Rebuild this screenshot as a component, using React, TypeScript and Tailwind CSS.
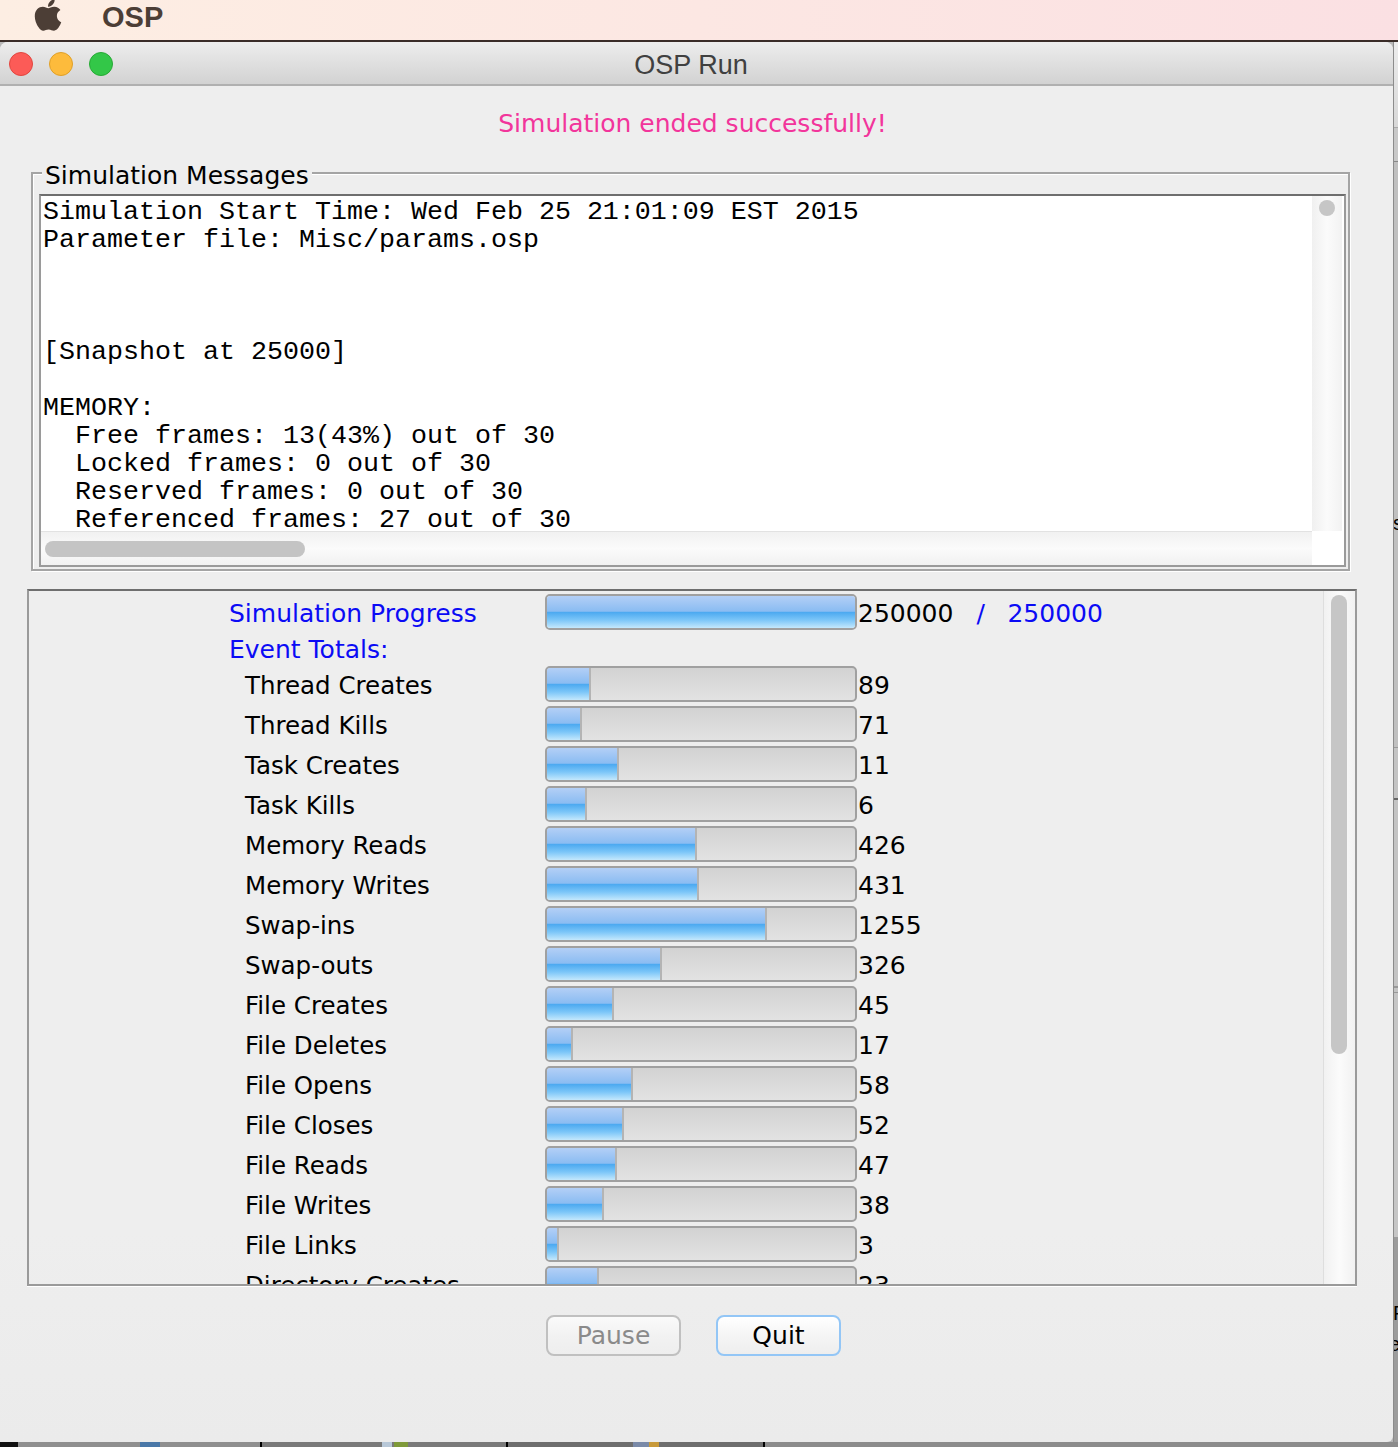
import { FaApple } from 'react-icons/fa';

const fillBg =
  'bg-[linear-gradient(180deg,#b3cff6_0%,#8abcf2_48%,#4aa8f0_50%,#7cc6f8_75%,#c4e8fc_100%)]';

const events: [string, string, number][] = [
  ['Thread Creates', '89', 44],
  ['Thread Kills', '71', 35],
  ['Task Creates', '11', 72],
  ['Task Kills', '6', 40],
  ['Memory Reads', '426', 150],
  ['Memory Writes', '431', 152],
  ['Swap-ins', '1255', 220],
  ['Swap-outs', '326', 115],
  ['File Creates', '45', 67],
  ['File Deletes', '17', 26],
  ['File Opens', '58', 86],
  ['File Closes', '52', 77],
  ['File Reads', '47', 70],
  ['File Writes', '38', 57],
  ['File Links', '3', 12],
  ['Directory Creates', '23', 52],
];

const messages = [
  'Simulation Start Time: Wed Feb 25 21:01:09 EST 2015',
  'Parameter file: Misc/params.osp',
  '',
  '',
  '',
  '[Snapshot at 25000]',
  '',
  'MEMORY:',
  '  Free frames: 13(43%) out of 30',
  '  Locked frames: 0 out of 30',
  '  Reserved frames: 0 out of 30',
  '  Referenced frames: 27 out of 30',
];

function Bar({ fill }: { fill: number }) {
  return (
    <div className="w-[312px] h-[36px] mb-[4px] shrink-0 rounded-[5px] border-2 border-[#a0a0a0] bg-[linear-gradient(180deg,#d2d2d2,#e2e2e2)] overflow-hidden">
      <div
        className={`h-full border-r-2 border-[#b4b4b4] ${fillBg}`}
        style={{ width: fill }}
      />
    </div>
  );
}

// sliver of whatever sits behind the window on the right
function DesktopStrip() {
  return (
    <div className="relative flex-1 flex flex-col overflow-hidden border-l border-[#8c8c8c] font-['Liberation_Sans',sans-serif] text-[20px] leading-none text-black">
      <div className="h-[86px] shrink-0 bg-[linear-gradient(180deg,#ececec,#d8d8d8)] border-b border-[#aaaaaa]" />
      <div className="h-[34px] shrink-0 bg-[#c8c8c8] border-b border-[#888888]" />
      <div className="h-[586px] shrink-0 bg-[#c0c0c0] border-b border-[#9a9a9a]" />
      <div className="h-[52px] shrink-0 bg-[#c4c4c4] border-b-2 border-[#666666]" />
      <div className="h-[188px] shrink-0 bg-[#c4c4c4] border-b-2 border-[#999999]" />
      <div className="h-[5px] shrink-0 bg-[#c4c4c4] border-b border-[#999999]" />
      <div className="h-[244px] shrink-0 bg-[#c6c6c6]" />
      <div className="flex-1 bg-[#9c9c9c]" />
      <span className="absolute left-[-1px] top-[471px]">s</span>
      <span className="absolute left-[-1px] top-[1261px]">P</span>
      <span className="absolute left-[-5px] top-[1292px]">e</span>
    </div>
  );
}

export default function App() {
  return (
    <div className="w-[1398px] h-[1447px] overflow-hidden flex flex-col font-['DejaVu_Sans',sans-serif] text-black">
      {/* menu bar */}
      <div className="h-[42px] shrink-0 flex items-start border-b-2 border-[#3a2c28] bg-[linear-gradient(90deg,#fdeee3,#fbe0e3)] text-[#4c3e36]">
        <FaApple className="w-[32px] h-[36px] ml-[32px] -mt-[3px]" />
        <span className="ml-[38px] mt-[-1px] text-[29px] leading-[36px] font-bold font-['Liberation_Sans',sans-serif]">
          OSP
        </span>
      </div>

      <div className="flex-1 flex min-h-0 bg-[#b8b8b8]">
        {/* window */}
        <div className="w-[1393px] shrink-0 flex flex-col rounded-t-[8px] rounded-br-[6px] overflow-hidden bg-[linear-gradient(180deg,#eeeeee_85%,#ebebeb)]">
          <div className="relative h-[44px] shrink-0 flex items-center justify-center border-b-2 border-[#b0b0b0] bg-[linear-gradient(180deg,#ededed,#d2d2d2)]">
            <div className="absolute left-[9px] top-[10px] flex gap-[16px]">
              <span className="w-[24px] h-[24px] rounded-full bg-[#fc5b57] border border-[#e2463f]" />
              <span className="w-[24px] h-[24px] rounded-full bg-[#fdbb3c] border border-[#e0a028]" />
              <span className="w-[24px] h-[24px] rounded-full bg-[#33c748] border border-[#27aa35]" />
            </div>
            <span className="ml-[-11px] mt-[5px] text-[27px] text-[#404040] font-['Liberation_Sans',sans-serif]">
              OSP Run
            </span>
          </div>

          <div className="flex-1 flex flex-col pl-[27px]">
            <div className="h-[86px] shrink-0 flex items-start justify-center pr-[35px] pt-[23px] text-[#f2359b] text-[25px] leading-[30px]">
              Simulation ended successfully!
            </div>

            {/* simulation messages */}
            <div className="relative ml-[4px] w-[1319px] h-[399px] shrink-0 border-2 border-[#a4a4a4] pl-[6px] pr-[2px] pb-[2px] pt-[20px] shadow-[inset_1px_1px_0_#ffffff,1px_1px_0_#ffffff]">
              <span className="absolute left-[9px] top-[-14px] bg-[#eeeeee] px-[3px] text-[25px] leading-[32px]">
                Simulation Messages
              </span>
              <div className="h-full border-2 border-x-[#9a9a9a] border-t-[#6e6e6e] border-b-[#9a9a9a] bg-white flex flex-col">
                <div className="flex-1 flex min-h-0">
                  <pre className="flex-1 pl-[2px] pt-[2px] overflow-hidden font-['Liberation_Mono',monospace] text-[26.67px] leading-[28px]">
                    {messages.join('\n')}
                  </pre>
                  <div className="w-[30px] mr-[2px] shrink-0 flex justify-center pt-[4px] bg-[linear-gradient(90deg,#f0f0f0,#fbfbfb,#f2f2f2)]">
                    <span className="w-[16px] h-[16px] rounded-full bg-[#c6c6c6]" />
                  </div>
                </div>
                <div className="h-[34px] shrink-0 flex">
                  <div className="flex-1 flex items-center pl-[4px] border-t border-[#e2e2e2] bg-[linear-gradient(180deg,#f1f1f1,#fbfbfb,#f1f1f1)]">
                    <span className="w-[260px] h-[16px] rounded-full bg-[#c4c4c4]" />
                  </div>
                  <div className="w-[32px] shrink-0 bg-white" />
                </div>
              </div>
            </div>

            {/* event counters */}
            <div className="mt-[18px] w-[1330px] h-[697px] shrink-0 flex border-2 border-[#9a9a9a] border-t-[#6e6e6e] overflow-hidden shadow-[0_1px_0_#ffffff]">
              <div className="flex-1 min-w-0 pt-[5px] pl-[200px] text-[25px] leading-[36px]">
                <div className="h-[36px] flex items-center text-[#0b0bf5]">
                  <span className="w-[316px] shrink-0">Simulation Progress</span>
                  <Bar fill={310} />
                  <span className="ml-[1px] text-black">250000</span>
                  <span className="ml-[23px] w-[31px]">/</span>
                  <span>250000</span>
                </div>
                <div className="h-[36px] flex items-center text-[#0b0bf5]">Event Totals:</div>
                <div className="flex flex-col gap-[4px]">
                  {events.map(([label, value, fill]) => (
                    <div key={label} className="h-[36px] shrink-0 flex items-center">
                      <span className="w-[316px] pl-[16px] shrink-0 text-[24.5px]">{label}</span>
                      <Bar fill={fill} />
                      <span className="ml-[1px]">{value}</span>
                    </div>
                  ))}
                </div>
              </div>
              <div className="w-[32px] shrink-0 flex justify-center pt-[4px] pr-[1px] border-l border-[#dedede] bg-[linear-gradient(90deg,#f1f1f1,#fbfbfb,#f1f1f1)]">
                <span className="w-[16px] h-[459px] rounded-full bg-[#c6c6c6]" />
              </div>
            </div>

            {/* buttons */}
            <div className="mt-[29px] flex pl-[519px] gap-[35px] text-[25px]">
              <button className="w-[135px] h-[41px] rounded-[8px] border-2 border-[#c0c0c0] text-[#8a8a8a] bg-[linear-gradient(180deg,#fafafa,#f2f2f2_50%,#eeeeee)]">
                Pause
              </button>
              <button className="w-[125px] h-[41px] rounded-[8px] border-2 border-[#93c6f6] bg-[linear-gradient(180deg,#ffffff,#f5f5f5_50%,#eeeeee)]">
                Quit
              </button>
            </div>
          </div>
        </div>

        <DesktopStrip />
      </div>

      {/* desktop peeking out at the bottom */}
      <div className="h-[5px] shrink-0 flex overflow-hidden">
        <div className="w-[18px] bg-[#111111]" />
        <div className="w-[244px] pl-[122px] bg-[#8f8f8f] border-r-2 border-black">
          <div className="w-[20px] h-full bg-[#4a78a8]" />
        </div>
        <div className="w-[246px] pl-[120px] flex gap-[2px] bg-[#7a7a7a] border-r-2 border-black">
          <div className="w-[10px] h-full bg-[#b8c8d8]" />
          <div className="w-[14px] h-full bg-[#7f9a3a]" />
        </div>
        <div className="w-[257px] pl-[125px] flex bg-[#6e6e6e] border-r-2 border-black">
          <div className="w-[16px] h-full bg-[#7a8aa8]" />
          <div className="w-[10px] h-full bg-[#c89a3a]" />
        </div>
        <div className="flex-1 bg-[#8c8c8c]" />
      </div>
    </div>
  );
}
